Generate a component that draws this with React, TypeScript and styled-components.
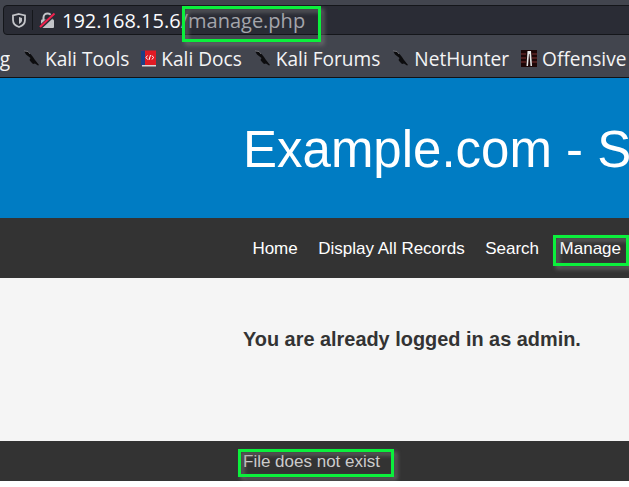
import styled, { createGlobalStyle } from 'styled-components'

const GlobalStyle = createGlobalStyle`
  html, body {
    margin: 0;
    padding: 0;
    background: #fff;
    overflow: hidden;
  }
  body {
    width: 629px;
    height: 487px;
    font-family: "Liberation Sans", Arial, sans-serif;
  }
`

const Page = styled.div`
  width: 629px;
  height: 481px;
  overflow: hidden;
  display: flex;
  flex-direction: column;
`

const Chrome = styled.div`
  height: 78px;
  flex: none;
  background: #42454e;
  border-bottom: 1px solid #101216;
  box-sizing: border-box;
  padding-top: 5px;
  display: flex;
  flex-direction: column;
`

const UrlBar = styled.div`
  height: 30px;
  margin-left: 3px;
  margin-right: -6px;
  flex: none;
  display: flex;
  align-items: center;
  background: #2a2c35;
  border: 1px solid #14161a;
  border-radius: 4px;
  box-sizing: border-box;
  font-family: "Open Sans", sans-serif;
  font-size: 20px;
`

const ShieldCell = styled.div`
  width: 29px;
  height: 100%;
  flex: none;
  display: flex;
  align-items: center;
  justify-content: center;
  position: relative;
  &::after {
    content: '';
    position: absolute;
    right: 0;
    top: 4px;
    bottom: 4px;
    width: 1px;
    background: #15171b;
  }
`

const LockCell = styled.div`
  width: 29px;
  flex: none;
  display: flex;
  align-items: center;
  justify-content: center;
`

const Host = styled.span`
  color: #fbfbfe;
`

const UrlPath = styled.span`
  color: #a4a5ab;
`

const Bookmarks = styled.div`
  flex: 1;
  display: flex;
  align-items: center;
  overflow: hidden;
  white-space: nowrap;
  font-family: "Open Sans", sans-serif;
  font-size: 19.1px;
  color: #f4f4f5;
  padding-top: 5px;
`

const Bookmark = styled.div`
  display: flex;
  align-items: center;
  gap: 5px;
  margin-right: 12px;
  flex: none;
`

const Overflowed = styled.span`
  flex: none;
  width: 10px;
  margin-right: 13px;
  direction: rtl;
  overflow: hidden;
`

const Banner = styled.header`
  height: 140px;
  flex: none;
  background: #007cc3;
  color: #fff;
  display: flex;
  align-items: center;
  padding: 2px 0 0 243px;
  overflow: hidden;
  white-space: nowrap;
  font-size: 51px;
  box-sizing: border-box;
`

const Nav = styled.nav`
  height: 60px;
  flex: none;
  background: #333;
  display: flex;
  align-items: center;
  justify-content: flex-end;
  gap: 20.5px;
  padding: 1px 8px 0 0;
  box-sizing: border-box;
  font-size: 17px;
  color: #fff;
`

const Content = styled.main`
  flex: 1;
  background: #f5f5f5;
  color: #333;
  padding: 50px 0 0 243px;
  font-size: 19.9px;
  font-weight: 700;
  box-sizing: border-box;
`

const Footer = styled.footer`
  height: 40px;
  flex: none;
  background: #333;
  color: #ccc;
  font-size: 17px;
  padding: 11px 0 0 243px;
  box-sizing: border-box;
`

type Inset = { $left: number; $top: number; $right: number; $bottom: number }

const Highlight = styled.span<Inset>`
  position: relative;
  &::after {
    content: '';
    position: absolute;
    box-sizing: border-box;
    border: 3px solid #0bf03c;
    filter: drop-shadow(3px 3px 2px rgba(125, 125, 125, 0.75));
    left: ${(p) => p.$left}px;
    top: ${(p) => p.$top}px;
    right: ${(p) => p.$right}px;
    bottom: ${(p) => p.$bottom}px;
  }
`

const Knife = () => (
  <svg width="17" height="17" viewBox="0 0 17 17">
    <path d="M1 1 L5 1.5 L8 4.5 L10 7 L12 10 L16 15 L15 15.5 L12 13.5 L10 14 L8 12 L6.5 10 L7.5 8 L3 4.5 Z" fill="#0c0c0e" />
    <path d="M1 1 L5 1.5 L7 4" stroke="#8b8d92" strokeWidth="0.7" fill="none" />
  </svg>
)

const Book = () => (
  <svg width="15" height="17" viewBox="0 0 15 17">
    <rect x="0" y="0.5" width="15" height="15" fill="#e01b24" />
    <rect x="0" y="0.5" width="4" height="15" fill="#1d3f86" />
    <rect x="1" y="15" width="14" height="1.5" fill="#d8d8d8" />
    <path d="M6.5 5.5 L5 7.5 L6.5 9.5 M11 5.5 L12.5 7.5 L11 9.5 M9.5 5 L8 10" stroke="#fff" strokeWidth="1" fill="none" />
  </svg>
)

const Offensive = () => (
  <svg width="16" height="17" viewBox="0 0 16 17">
    <rect width="16" height="17" fill="#1d0707" />
    <path d="M0 4 H5 M11 4 H16 M0 8 H5 M11 8 H16 M0 12 H5 M11 12 H16" stroke="#5c2424" strokeWidth="1.5" />
    <path d="M5.5 16 L6.5 1 H10 L11 16 H9.5 L8.5 4 H8 L7 16 Z" fill="#e8e8e8" />
  </svg>
)

const Shield = () => (
  <svg width="14" height="15" viewBox="0 0 14 15">
    <path d="M7 1 L13 2.5 V7 C13 10.5 10 13 7 14 C4 13 1 10.5 1 7 V2.5 Z" fill="none" stroke="#c3c4c8" strokeWidth="1.8" />
    <path d="M7 4 L10 5 V7.5 C10 9 8.5 10.3 7 11 Z" fill="#c3c4c8" />
  </svg>
)

const BrokenLock = () => (
  <svg width="17" height="17" viewBox="0 0 17 17">
    <path d="M4.5 8 V5.5 C4.5 3 6.5 1.5 8.5 1.5 C10.5 1.5 12.5 3 12.5 5.5 V8" fill="none" stroke="#c3c4c8" strokeWidth="2" />
    <rect x="2" y="7.5" width="13" height="8.5" rx="1" fill="#c3c4c8" />
    <path d="M1 15.5 L15.5 2" stroke="#2a2c35" strokeWidth="4" />
    <path d="M1 15 L15.5 1.5" stroke="#f0214d" strokeWidth="2" />
  </svg>
)

export default function App() {
  return (
    <Page>
      <GlobalStyle />
      <Chrome>
        <UrlBar>
          <ShieldCell>
            <Shield />
          </ShieldCell>
          <LockCell>
            <BrokenLock />
          </LockCell>
          <Host>192.168.15.6</Host>
          <Highlight $left={1} $top={-1} $right={-16} $bottom={-8}>
            <UrlPath>/manage.php</UrlPath>
          </Highlight>
        </UrlBar>
        <Bookmarks>
          <Overflowed>g</Overflowed>
          <Bookmark>
            <Knife />
            Kali Tools
          </Bookmark>
          <Bookmark>
            <Book />
            Kali Docs
          </Bookmark>
          <Bookmark>
            <Knife />
            Kali Forums
          </Bookmark>
          <Bookmark>
            <Knife />
            NetHunter
          </Bookmark>
          <Bookmark>
            <Offensive />
            Offensive
          </Bookmark>
        </Bookmarks>
      </Chrome>
      <Banner>Example.com - Staff Details</Banner>
      <Nav>
        <span>Home</span>
        <span>Display All Records</span>
        <span>Search</span>
        <Highlight $left={-7} $top={-4} $right={-8} $bottom={-7}>
          Manage
        </Highlight>
      </Nav>
      <Content>You are already logged in as admin.</Content>
      <Footer>
        <Highlight $left={-5} $top={-3} $right={-14} $bottom={-6}>
          File does not exist
        </Highlight>
      </Footer>
    </Page>
  )
}
